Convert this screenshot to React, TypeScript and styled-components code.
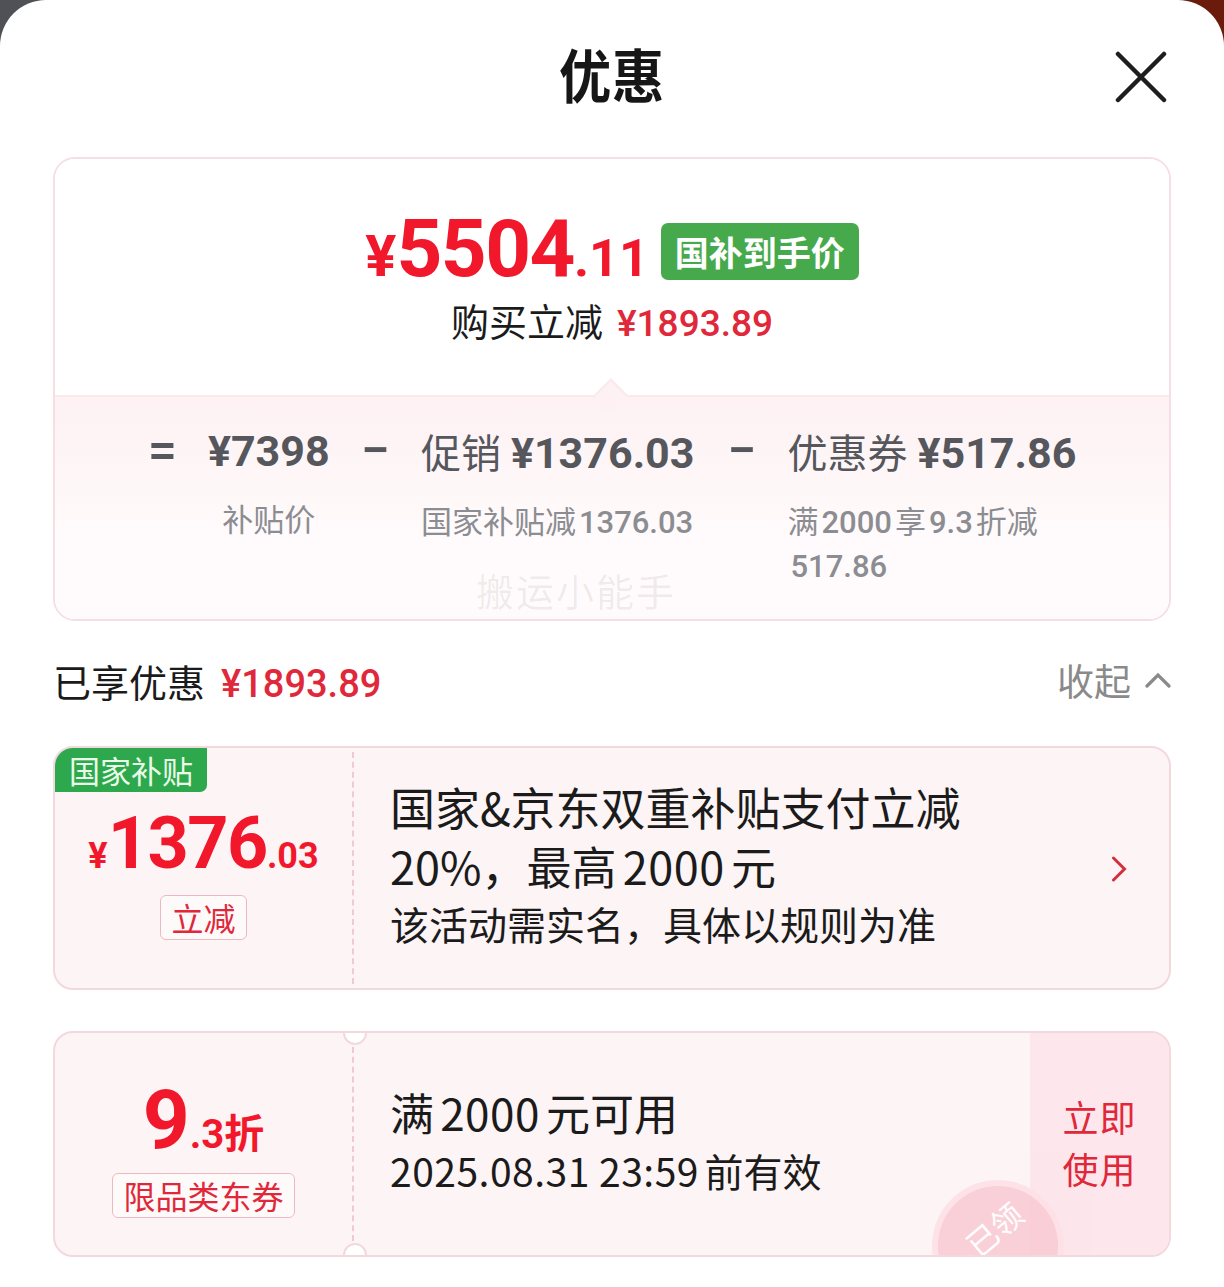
import React from 'react';
import styled, { createGlobalStyle } from 'styled-components';

const RED = '#f2182c';
const SOFT_RED = '#e0283a';
const GREY = '#55575c';
const LIGHT_GREY = '#8b8d92';
const INK = '#1b1b1b';
const CJK = '"Noto Sans CJK SC", "Noto Sans", sans-serif';
const NUM = 'Roboto, "Noto Sans CJK SC", sans-serif';

const GlobalStyle = createGlobalStyle`
  html, body {
    margin: 0;
    padding: 0;
  }
  body {
    background: linear-gradient(90deg, #4f5156 0%, #4f5156 50%, #6b1b0b 50%, #6b1b0b 100%);
    font-family: ${CJK};
    color: ${INK};
  }
`;

const Sheet = styled.div`
  background: #fff;
  border-radius: 46px 46px 0 0;
  min-height: 1287px;
  padding: 0 53px;
  box-sizing: border-box;
`;

const Header = styled.header`
  display: grid;
  grid-template-columns: 1fr auto 1fr;
  align-items: center;
  height: 152px;
  padding-top: 2px;
  box-sizing: border-box;
`;

const Title = styled.h1`
  grid-column: 2;
  margin: -8px 0 0;
  font-size: 58px;
  font-weight: 700;
  letter-spacing: 1px;
  color: #161616;
  transform: scaleX(0.9);
`;

const CloseButton = styled.button`
  grid-column: 3;
  justify-self: end;
  margin-right: 4px;
  width: 52px;
  height: 52px;
  padding: 0;
  border: none;
  background: none;
  display: flex;
`;

const SummaryCard = styled.section`
  margin-top: 5px;
  border: 2px solid #f6dfe4;
  border-radius: 22px;
  overflow: hidden;
  position: relative;
`;

const SummaryTop = styled.div`
  background: #fff;
  padding: 44px 0 46px;
  display: flex;
  flex-direction: column;
  align-items: center;
`;

const PriceRow = styled.div`
  display: flex;
  align-items: center;
  gap: 12px;
  height: 92px;
`;

const BigPrice = styled.div`
  font-family: ${NUM};
  font-weight: 700;
  color: ${RED};
  white-space: nowrap;
  line-height: 1;
`;

const Num = styled.span<{ $size: number; $track?: number }>`
  font-size: ${(p) => p.$size}px;
  letter-spacing: ${(p) => p.$track ?? 0}px;
`;

const GreenBadge = styled.span`
  background: #46a94b;
  color: #fff;
  font-size: 34px;
  font-weight: 700;
  line-height: 57px;
  padding: 0 14px;
  border-radius: 7px;
  margin-top: 4px;
`;

const SaveLine = styled.div`
  font-size: 38px;
  line-height: 50px;
  color: ${INK};
  display: flex;
  align-items: baseline;
  gap: 14px;
`;

const RedAmount = styled.span<{ $size?: number }>`
  font-family: ${NUM};
  font-weight: 500;
  color: ${SOFT_RED};
  font-size: ${(p) => p.$size ?? 36}px;
`;

const SummaryBottom = styled.div`
  position: relative;
  background: linear-gradient(#fdf1f3, #fffafb 60%, #fffbfc);
  border-top: 2px solid #fbe9ed;
  padding: 26px 0 32px;
  display: flex;
  justify-content: center;
  align-items: flex-start;
  gap: 31px;

  &::before {
    content: '';
    position: absolute;
    top: -13px;
    left: calc(50% - 14px);
    width: 22px;
    height: 22px;
    background: #fdf1f3;
    border-top: 2px solid #fbe9ed;
    border-left: 2px solid #fbe9ed;
    transform: rotate(45deg) scaleY(1.1);
  }
`;

const Op = styled.span`
  font-family: ${NUM};
  font-size: 52px;
  font-weight: 500;
  line-height: 56px;
  color: ${GREY};
`;

const Term = styled.div<{ $center?: boolean }>`
  display: flex;
  flex-direction: column;
  align-items: ${(p) => (p.$center ? 'center' : 'flex-start')};
`;

const TermMain = styled.div`
  display: flex;
  align-items: baseline;
  gap: 10px;
  font-size: 40px;
  line-height: 56px;
  color: ${GREY};
  white-space: nowrap;
`;

const TermAmount = styled.span`
  font-family: ${NUM};
  font-weight: 700;
  font-size: 43px;
`;

const TermSub = styled.div<{ $wrap?: boolean }>`
  margin-top: 18px;
  font-size: 31px;
  line-height: 41px;
  color: ${LIGHT_GREY};
  ${(p) => (p.$wrap ? 'width: 0; min-width: 100%;' : 'white-space: nowrap;')}
`;

const SubNum = styled.span`
  font-family: ${NUM};
  font-weight: 500;
  margin: 0 3px;
`;

const Watermark = styled.span`
  position: absolute;
  left: 421px;
  bottom: 2px;
  font-size: 38px;
  letter-spacing: 2px;
  color: rgba(0, 0, 0, 0.07);
`;

const SectionHead = styled.div`
  display: flex;
  justify-content: space-between;
  align-items: center;
  height: 50px;
  margin: 34px 0 41px;
`;

const SectionTitle = styled.div`
  display: flex;
  align-items: baseline;
  gap: 16px;
  font-size: 38px;
  color: ${INK};
`;

const Collapse = styled.button`
  display: flex;
  align-items: center;
  gap: 14px;
  border: none;
  background: none;
  padding: 0;
  font-family: ${CJK};
  font-size: 37px;
  color: #8a8a8a;
`;

const Coupon = styled.article<{ $height: number }>`
  position: relative;
  display: grid;
  grid-template-columns: 297px 0 1fr auto;
  height: ${(p) => p.$height}px;
  box-sizing: border-box;
  border: 2px solid #f3d9de;
  border-radius: 20px;
  background: #fdf4f5;
  overflow: hidden;
  margin-bottom: 41px;
`;

const CornerTag = styled.span`
  position: absolute;
  top: 0;
  left: 0;
  background: #2ea84d;
  color: #eafbe9;
  font-size: 31px;
  line-height: 44px;
  padding: 0 14px;
  border-radius: 0 0 7px 0;
`;

const ValueCol = styled.div<{ $gap: number; $pad: number }>`
  display: flex;
  flex-direction: column;
  align-items: center;
  justify-content: center;
  gap: ${(p) => p.$gap}px;
  padding-top: ${(p) => p.$pad}px;
`;

const ValueText = styled.div`
  font-family: ${NUM};
  font-weight: 700;
  color: ${RED};
  line-height: 1;
  white-space: nowrap;
`;

const Unit = styled.span`
  font-family: ${CJK};
  font-weight: 700;
  font-size: 40px;
`;

const OutlineTag = styled.span`
  border: 1.5px solid #edb9c1;
  border-radius: 6px;
  background: rgba(255, 255, 255, 0.5);
  color: ${SOFT_RED};
  font-size: 32px;
  line-height: 43px;
  padding: 0 10px;
`;

const Divider = styled.div`
  border-left: 2px dashed #efcbd1;
  margin: 4px 0;
`;

const Notch = styled.span<{ $edge: 'top' | 'bottom' }>`
  position: absolute;
  left: 288px;
  ${(p) => p.$edge}: -12px;
  width: 20px;
  height: 20px;
  border-radius: 50%;
  background: #fff;
  border: 2px solid #f3d9de;
`;

const Detail = styled.div`
  display: flex;
  flex-direction: column;
  justify-content: center;
  padding: 0 0 8px 38px;
  color: ${INK};
`;

const DetailLine = styled.div<{ $size: number; $lh: number }>`
  font-size: ${(p) => p.$size}px;
  line-height: ${(p) => p.$lh}px;
  white-space: nowrap;
`;

const Digits = styled.span<{ $lead?: boolean }>`
  margin: 0 0.14em 0 ${(p) => (p.$lead ? 0 : 0.14)}em;
  letter-spacing: 0.5px;
`;

const Arrow = styled.div`
  display: flex;
  align-items: center;
  padding: 2px 42px 0 0;
`;

const UseButton = styled.button`
  width: 139px;
  border: none;
  background: #fde6ec;
  color: ${SOFT_RED};
  font-family: ${CJK};
  font-size: 36px;
  line-height: 52px;
  padding: 0 30px 4px;
  letter-spacing: 1px;
`;

const Stamp = styled.div`
  position: absolute;
  left: 877px;
  top: 147px;
  width: 132px;
  height: 132px;
  box-sizing: border-box;
  padding: 0 0 34px 16px;
  border-radius: 50%;
  background: #fac9d3;
  border: 6px solid #fde0e6;
  display: flex;
  align-items: center;
  justify-content: center;
  color: #fff;
  font-size: 31px;
  transform: rotate(-40deg);
  opacity: 0.85;
`;

const ChevronUp = () => (
  <svg width="26" height="16" viewBox="0 0 26 16">
    <path d="M2 14 L13 3 L24 14" fill="none" stroke="#8a8a8a" strokeWidth="3.2" strokeLinecap="round" />
  </svg>
);

const ChevronRight = () => (
  <svg width="16" height="26" viewBox="0 0 16 26">
    <path d="M2.5 2 L13.5 13 L2.5 24" fill="none" stroke="#d3303d" strokeWidth="3" strokeLinecap="round" />
  </svg>
);

const App = () => (
  <>
    <GlobalStyle />
    <Sheet>
      <Header>
        <Title>优惠</Title>
        <CloseButton aria-label="关闭">
          <svg width="52" height="52" viewBox="0 0 52 52">
            <path d="M3 3 L49 49 M49 3 L3 49" stroke="#1e1e1e" strokeWidth="4.5" strokeLinecap="round" />
          </svg>
        </CloseButton>
      </Header>

      <SummaryCard>
        <SummaryTop>
          <PriceRow>
            <BigPrice>
              <Num $size={58}>¥</Num>
              <Num $size={80} $track={-1.5}>5504</Num>
              <Num $size={52}>.11</Num>
            </BigPrice>
            <GreenBadge>国补到手价</GreenBadge>
          </PriceRow>
          <SaveLine>
            购买立减
            <RedAmount $size={37}>¥1893.89</RedAmount>
          </SaveLine>
        </SummaryTop>
        <SummaryBottom>
          <Op>=</Op>
          <Term $center>
            <TermMain>
              <TermAmount>¥7398</TermAmount>
            </TermMain>
            <TermSub>补贴价</TermSub>
          </Term>
          <Op>−</Op>
          <Term>
            <TermMain>
              促销<TermAmount>¥1376.03</TermAmount>
            </TermMain>
            <TermSub>
              国家补贴减<SubNum>1376.03</SubNum>
            </TermSub>
          </Term>
          <Op>−</Op>
          <Term>
            <TermMain>
              优惠券<TermAmount>¥517.86</TermAmount>
            </TermMain>
            <TermSub $wrap>
              满<SubNum>2000</SubNum>享<SubNum>9.3</SubNum>折减 <SubNum>517.86</SubNum>
            </TermSub>
          </Term>
          <Watermark>搬运小能手</Watermark>
        </SummaryBottom>
      </SummaryCard>

      <SectionHead>
        <SectionTitle>
          已享优惠
          <RedAmount $size={38}>¥1893.89</RedAmount>
        </SectionTitle>
        <Collapse>
          收起
          <ChevronUp />
        </Collapse>
      </SectionHead>

      <Coupon $height={244}>
        <CornerTag>国家补贴</CornerTag>
        <ValueCol $gap={15} $pad={11}>
          <ValueText>
            <Num $size={36}>¥</Num>
            <Num $size={72} $track={-1.5}>1376</Num>
            <Num $size={36}>.03</Num>
          </ValueText>
          <OutlineTag>立减</OutlineTag>
        </ValueCol>
        <Divider />
        <Detail>
          <DetailLine $size={45} $lh={60}>国家&amp;京东双重补贴支付立减</DetailLine>
          <DetailLine $size={45} $lh={58}>
            20%，最高<Digits>2000</Digits>元
          </DetailLine>
          <DetailLine $size={39} $lh={56}>该活动需实名，具体以规则为准</DetailLine>
        </Detail>
        <Arrow>
          <ChevronRight />
        </Arrow>
      </Coupon>

      <Coupon $height={226}>
        <ValueCol $gap={12} $pad={8}>
          <ValueText>
            <Num $size={82}>9</Num>
            <Num $size={40}>.3</Num>
            <Unit>折</Unit>
          </ValueText>
          <OutlineTag>限品类东券</OutlineTag>
        </ValueCol>
        <Divider />
        <Detail>
          <DetailLine $size={44} $lh={60}>
            满<Digits>2000</Digits>元可用
          </DetailLine>
          <DetailLine $size={39} $lh={56}>
            <Digits $lead>2025.08.31 23:59</Digits>前有效
          </DetailLine>
        </Detail>
        <UseButton>立即使用</UseButton>
        <Notch $edge="top" />
        <Notch $edge="bottom" />
        <Stamp>已领</Stamp>
      </Coupon>
    </Sheet>
  </>
);

export default App;
